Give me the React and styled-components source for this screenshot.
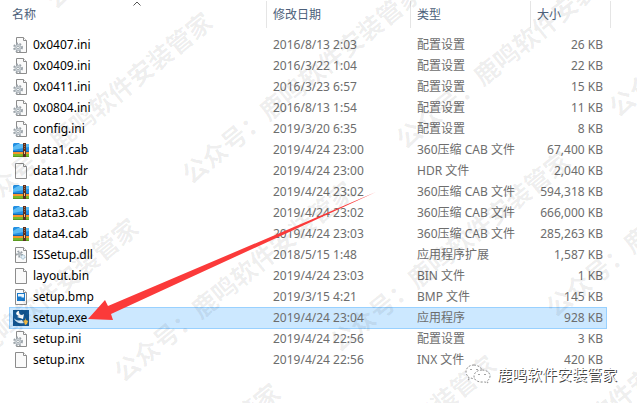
import React from "react";
import styled, { createGlobalStyle } from "styled-components";

const files = [
  { name: "0x0407.ini", date: "2016/8/13 2:03", type: "配置设置", size: "26 KB", icon: "ini" },
  { name: "0x0409.ini", date: "2016/3/22 1:04", type: "配置设置", size: "22 KB", icon: "ini" },
  { name: "0x0411.ini", date: "2016/3/23 6:57", type: "配置设置", size: "15 KB", icon: "ini" },
  { name: "0x0804.ini", date: "2016/8/13 1:54", type: "配置设置", size: "11 KB", icon: "ini" },
  { name: "config.ini", date: "2019/3/20 6:35", type: "配置设置", size: "8 KB", icon: "ini" },
  { name: "data1.cab", date: "2019/4/24 23:00", type: "360压缩 CAB 文件", size: "67,400 KB", icon: "cab" },
  { name: "data1.hdr", date: "2019/4/24 23:00", type: "HDR 文件", size: "2,040 KB", icon: "blank" },
  { name: "data2.cab", date: "2019/4/24 23:02", type: "360压缩 CAB 文件", size: "594,318 KB", icon: "cab" },
  { name: "data3.cab", date: "2019/4/24 23:02", type: "360压缩 CAB 文件", size: "666,000 KB", icon: "cab" },
  { name: "data4.cab", date: "2019/4/24 23:03", type: "360压缩 CAB 文件", size: "285,263 KB", icon: "cab" },
  { name: "ISSetup.dll", date: "2018/5/15 1:48", type: "应用程序扩展", size: "1,587 KB", icon: "dll" },
  { name: "layout.bin", date: "2019/4/24 23:03", type: "BIN 文件", size: "1 KB", icon: "blank" },
  { name: "setup.bmp", date: "2019/3/15 4:21", type: "BMP 文件", size: "145 KB", icon: "bmp" },
  { name: "setup.exe", date: "2019/4/24 23:04", type: "应用程序", size: "928 KB", icon: "exe", selected: true },
  { name: "setup.ini", date: "2019/4/24 22:56", type: "配置设置", size: "3 KB", icon: "ini" },
  { name: "setup.inx", date: "2019/4/24 22:56", type: "INX 文件", size: "420 KB", icon: "blank" },
];

// centre of every watermark
const marks = [
  [165, -93],
  [-125, 143],
  [91, 111],
  [301, 82],
  [515, 47],
  [728, 15],
  [17, 317],
  [233, 280],
  [449, 250],
  [665, 215],
  [159, 482],
  [375, 454],
  [591, 419],
];

/// icons ///
function Paper() {
  return (
    <>
      <path d="M2.5 .5h8l3 3v12h-11z" fill="#fafafa" stroke="#8c8c8c" />
      <path d="M10.5 .5v3h3" fill="#fff" stroke="#8c8c8c" />
    </>
  );
}

function Gear({ x, y, r }) {
  return (
    <g transform={`translate(${x} ${y})`}>
      <circle r={r} fill="none" stroke="#9aa2a8" strokeWidth="1.8" strokeDasharray="1.8 1.5" />
      <circle r={r - 1} fill="#d9dfe3" stroke="#a3abb1" strokeWidth=".8" />
      <circle r={r / 3} fill="#fff" stroke="#8f999f" strokeWidth=".8" />
    </g>
  );
}

function FileIcon({ kind }) {
  return (
    <Icon viewBox="0 0 16 16" aria-hidden="true">
      {kind === "blank" && <Paper />}
      {kind === "ini" && (
        <>
          <path d="M3.5 .5h7l3 3v12h-10z" fill="#fafafa" stroke="#8c8c8c" />
          <path d="M10.5 .5v3h3" fill="#fff" stroke="#8c8c8c" />
          <Gear x={5} y={10.5} r={4} />
        </>
      )}
      {kind === "dll" && (
        <>
          <Paper />
          <Gear x={6.5} y={7} r={2.6} />
          <circle cx="10" cy="10" r="2" fill="#e5f1f8" stroke="#86a9bd" strokeDasharray="1 .6" />
        </>
      )}
      {kind === "bmp" && (
        <>
          <Paper />
          <path d="M4 4h8v8h-8z" fill="#1979c9" />
          <path d="M5 5h6v4l-1-1-1 1-1-2-1 1-1-1-1 1z" fill="#e9f6ff" />
        </>
      )}
      {kind === "cab" && (
        <>
          <path d="M0 2l1-1h5l1 1h9v8H0z" fill="#2490e2" />
          <path d="M0 5l5-3h11v3L0 8z" fill="#5cbcf5" />
          <path d="M0 9h16v1H0z" fill="#1565ae" />
          <path d="M0 10h16v2H0z" fill="#f7962c" />
          <path d="M0 12h16v3H0z" fill="#79b92a" />
          <path d="M0 14h16v1H0z" fill="#5a9a20" />
          <path d="M10 1h3v14h-3z" fill="#5c3020" />
          <path d="M11 2h1v1h-1zM11 4h1v1h-1zM11 6h1v1h-1z" fill="#a9714a" />
          <path d="M11 9h1v3h-1z" fill="#f0c58a" />
        </>
      )}
      {kind === "exe" && (
        <>
          <path d="M0 0h16v16H0z" fill="#135794" />
          <path d="M5 1C2 3 3 5 6 6L4 7l6 2 1-5-2 1C7 5 6 4 6 1z" fill="#fff" />
          <path d="M1 8c1 2 4 3 8 2l2 3C6 14 2 12 1 8z" fill="#d5e9f8" />
          <path d="M12 8l1 2 2 1-1 3-2 1-1-3-1-1 2-1z" fill="#f5b83c" />
        </>
      )}
    </Icon>
  );
}

function WechatIcon() {
  return (
    <WechatSvg viewBox="0 0 26 20" aria-hidden="true">
      <g fill="#fff" stroke="#777" strokeWidth=".8" strokeDasharray="2 1.5">
        <path d="M9 1C4 1 1 4 1 8c0 2 1 4 3 5l-1 3 3-2c2 1 4 1 6 0C18 12 18 6 15 3 13 2 11 1 9 1z" />
        <path d="M17 6c-5 0-8 3-8 6 0 4 3 6 8 6h3l3 1-1-2c2-1 3-3 3-5 0-3-3-6-8-6z" />
      </g>
      <path d="M6 5v1M12 5v1M14 10v1M20 10v1" stroke="#444" />
    </WechatSvg>
  );
}

function App() {
  return (
    <Page lang="zh-CN">
      <GlobalStyle />
      <FileTable>
        <colgroup>
          <col />
          <Col $width={144} />
          <Col $width={120} />
          <Col $width={77} />
          <Col $width={4} />
        </colgroup>
        <thead>
          <tr>
            <HeadCell scope="col" aria-sort="ascending">
              名称
              <SortMark viewBox="0 0 8 5" aria-hidden="true">
                <path d="M.5 4.5L4 1l3.5 3.5" fill="none" stroke="#555" />
              </SortMark>
            </HeadCell>
            <HeadCell scope="col">修改日期</HeadCell>
            <HeadCell scope="col">类型</HeadCell>
            <HeadCell scope="col">大小</HeadCell>
            <EdgeCell />
          </tr>
        </thead>
        <tbody>
          {files.map((file) => (
            <Row key={file.name} $selected={file.selected}>
              <NameCell>
                <FileName>
                  <FileIcon kind={file.icon} />
                  {file.name}
                </FileName>
              </NameCell>
              <Cell>{file.date}</Cell>
              <Cell>{file.type}</Cell>
              <SizeCell>{file.size}</SizeCell>
              <td></td>
            </Row>
          ))}
        </tbody>
      </FileTable>

      <Overlay aria-hidden="true">
        {marks.map(([x, y]) => (
          <Watermark key={`${x},${y}`} $x={x} $y={y}>
            公众号：鹿鸣软件安装管家
          </Watermark>
        ))}
        <Arrow viewBox="0 0 288 128">
          <path d="M0 127L17 108l3 6L288 0 23 122l2 6z" fill="#fb3a3a" />
        </Arrow>
      </Overlay>

      <Account>
        <WechatIcon />
        鹿鸣软件安装管家
      </Account>
    </Page>
  );
}

const GlobalStyle = createGlobalStyle`
  body {
    margin: 0;
    background: #fff;
  }
`;
const Page = styled.div`
  position: relative;
  box-sizing: border-box;
  min-height: 100vh;
  padding: 1px 26px 32px 9px;
  overflow: hidden;
  font-family: "Noto Sans", "Noto Sans CJK SC", sans-serif;
  font-size: 12px;
  line-height: 20px;
  color: #6d6d6d;
`;
const FileTable = styled.table`
  width: 100%;
  table-layout: fixed;
  border-collapse: separate;
  border-spacing: 0;

  thead::after {
    content: "";
    display: block;
    height: 6px;
  }
`;
const Col = styled.col`
  width: ${(props) => props.$width}px;
`;
const HeadCell = styled.th`
  position: relative;
  height: 27px;
  padding: 0 0 0 7px;
  text-align: left;
  font-weight: normal;
  color: #4c607a;

  &:first-child {
    padding-left: 3px;
  }
  & + & {
    border-left: 1px solid #e5e5e5;
    padding-left: 6px;
  }
`;
const EdgeCell = styled.td`
  padding: 0;
  border-right: 1px solid #e5e5e5;
`;
const SortMark = styled.svg`
  position: absolute;
  top: 0;
  left: 50%;
  width: 8px;
  height: 5px;
  margin-left: -5px;
`;
const Cell = styled.td`
  height: 21px;
  padding: 0 0 0 7px;
  white-space: nowrap;
`;
const NameCell = styled(Cell)`
  padding-left: 4px;
  color: #000;
`;
const SizeCell = styled(Cell)`
  padding: 0 4px 0 0;
  text-align: right;
`;
const Row = styled.tr`
  ${(props) =>
    props.$selected &&
    `
    td:not(:last-child) {
      background: #cce8ff;
      box-shadow: inset 0 1px #99d1ff, 0 1px #99d1ff;
    }
    td:first-child {
      box-shadow: inset 1px 1px #99d1ff, 0 1px #99d1ff;
    }
    td:nth-child(4) {
      box-shadow: inset -1px 1px #99d1ff, 0 1px #99d1ff;
    }
  `}
`;
const FileName = styled.div`
  display: flex;
  align-items: center;
  gap: 4px;
`;
const Icon = styled.svg`
  width: 16px;
  height: 16px;
`;
const Overlay = styled.div`
  position: absolute;
  inset: 0;
  overflow: hidden;
  pointer-events: none;
`;
const Watermark = styled.span`
  position: absolute;
  left: ${(props) => props.$x}px;
  top: ${(props) => props.$y}px;
  transform: translate(-50%, -50%) rotate(-39deg);
  font-family: "Noto Sans CJK SC", sans-serif;
  font-size: 25px;
  font-weight: bold;
  white-space: nowrap;
  color: rgba(0, 0, 0, 0.07);
`;
const Arrow = styled.svg`
  position: absolute;
  left: 88px;
  top: 192px;
  width: 288px;
  height: 128px;
`;
const Account = styled.div`
  position: absolute;
  right: 20px;
  bottom: 19px;
  display: flex;
  align-items: center;
  gap: 6px;
  font-family: "Noto Sans CJK SC", sans-serif;
  font-size: 15px;
  color: #fff;
  text-shadow: 1px 1px 0 #444;
`;
const WechatSvg = styled.svg`
  width: 26px;
  height: 20px;
`;

export default App;
